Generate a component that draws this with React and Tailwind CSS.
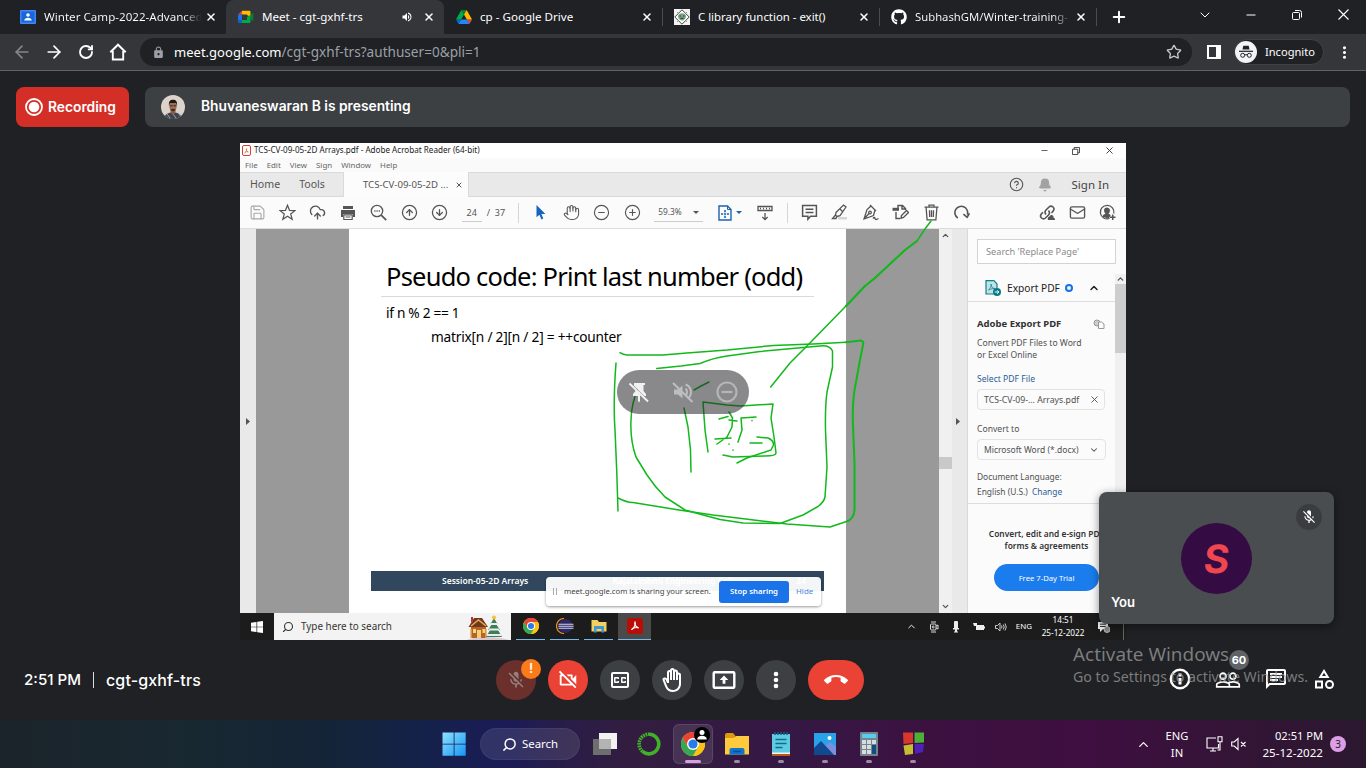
import {
  ArrowLeft, ArrowRight, RotateCw, X, Plus, Star, Minus, ChevronDown, ChevronUp,
  Save, CloudUpload, CircleArrowUp, CircleArrowDown, Hand, CircleMinus, CirclePlus,
  Mail, CircleHelp, Bell, Search,
} from "lucide-react";
import {
  MdLock, MdVolumeUp, MdMoreVert, MdCallEnd, MdOutlineVideocamOff, MdMicOff,
  MdOutlineClosedCaptionOff, MdOutlineBackHand,
  MdPeopleOutline, MdOutlineChat, MdOutlineCategory,
} from "react-icons/md";
import { FaGithub } from "react-icons/fa";

const SANS = "font-['Noto_Sans',sans-serif]";

/* ---------- logos ---------- */

function ClassroomLogo() {
  return (
    <svg viewBox="0 0 16 14" className="h-[14px] w-4">
      <rect width="16" height="14" rx="1" fill="#4285f4" />
      <rect x="1.5" y="1.5" width="13" height="11" fill="#1a66d6" />
      <circle cx="8" cy="5" r="1.8" fill="#fff" />
      <path d="M4.3 10.5c0-2 2-2.8 3.7-2.8s3.7.8 3.7 2.8z" fill="#fff" />
    </svg>
  );
}

function MeetLogo() {
  return (
    <svg viewBox="0 0 16 14" className="h-[14px] w-4">
      <path d="M0 4.5 4 .8V4.5z" fill="#ea4335" />
      <path d="M0 4.5h4v6H0z" fill="#1a73e8" />
      <path d="M0 10.5h4V13H1a1 1 0 0 1-1-1z" fill="#1a5dd0" />
      <path d="M4 .8h7.5a1 1 0 0 1 1 1V7L9 5V4.5H4z" fill="#fbbc04" />
      <path d="M4 10h5V7l3.5-2v7a1 1 0 0 1-1 1H4z" fill="#00ac47" />
      <path d="M12.5 5 15.3 2.5v9L12.5 9z" fill="#00832d" />
    </svg>
  );
}

function DriveLogo() {
  return (
    <svg viewBox="0 0 87.3 78" className="h-[14px] w-4">
      <path d="m6.6 66.85 3.85 6.65c.8 1.4 1.95 2.5 3.3 3.3l13.75-23.8h-27.5c0 1.55.4 3.1 1.2 4.5z" fill="#0066da" />
      <path d="m43.65 25-13.75-23.8c-1.35.8-2.5 1.9-3.3 3.3l-25.4 44a9.06 9.06 0 0 0 -1.2 4.5h27.5z" fill="#00ac47" />
      <path d="m73.55 76.8c1.35-.8 2.5-1.9 3.3-3.3l1.6-2.75 7.65-13.25c.8-1.4 1.2-2.95 1.2-4.5h-27.5l5.85 11.5z" fill="#ea4335" />
      <path d="m43.65 25 13.75-23.8c-1.35-.8-2.9-1.2-4.5-1.2h-18.5c-1.6 0-3.15.45-4.5 1.2z" fill="#00832d" />
      <path d="m59.8 53h-32.3l-13.75 23.8c1.35.8 2.9 1.2 4.5 1.2h50.8c1.6 0 3.15-.45 4.5-1.2z" fill="#2684fc" />
      <path d="m73.4 26.5-12.7-22c-.8-1.4-1.95-2.5-3.3-3.3l-13.75 23.8 16.15 28h27.45c0-1.55-.4-3.1-1.2-4.5z" fill="#ffba00" />
    </svg>
  );
}

function TutorialLogo() {
  return (
    <svg viewBox="0 0 16 16" className="h-4 w-4">
      <rect width="16" height="16" fill="#f3f3f1" />
      <path d="M8 .8 15.2 8 8 15.2.8 8z" fill="#fff" stroke="#444" strokeWidth="1" />
      <path d="M4 7.5c0-2.200 2-3.200 4-3.200s4 1 4 3.200-2 4-4 4-4-1.800-4-4z" fill="#79a386" />
      <path d="M5.500 7h1.500m2 0h1.500M6.500 9.300h3" stroke="#2d4a38" strokeWidth="1.200" />
      <path d="M3 3l2 2m8-2-2 2M3 13l2-2m8 2-2-2" stroke="#888" strokeWidth=".8" />
    </svg>
  );
}

function ChromeLogo({ className }) {
  return (
    <svg viewBox="0 0 24 24" className={className}>
      <circle cx="12" cy="12" r="12" fill="#fbc116" />
      <path d="M12 6h10.400A12 12 0 0 0 1.600 6l5.200 9z" fill="#ea4335" />
      <path d="M6.800 15 1.600 6A12 12 0 0 0 12 24l5.200-9z" fill="#34a853" />
      <path d="M17.200 15 12 24A12 12 0 0 0 22.400 6H12z" fill="#fbc116" />
      <circle cx="12" cy="12" r="6" fill="#fff" />
      <circle cx="12" cy="12" r="4.600" fill="#2a7bea" />
    </svg>
  );
}

function AcrobatMark({ className }) {
  return (
    <svg viewBox="0 0 16 16" className={className}>
      <path d="M8 3.200c1.200 2.800.3 5.300-3.800 8.800M8 3.200C6.900 6 8.600 9 12.300 10.200c-3-1-6-.3-8.100 1.800" fill="none" stroke="currentColor" strokeWidth="1.300" strokeLinecap="round" />
    </svg>
  );
}

/* ---------- browser chrome ---------- */

function Tab({ className, icon, title, children }) {
  return (
    <div className={`flex h-full shrink-0 items-center pr-[9px] ${className}`}>
      <span className="flex w-[24px] shrink-0 items-center">{icon}</span>
      <span className="min-w-0 flex-1 overflow-hidden whitespace-nowrap leading-5">{title}</span>
      {children}
      <X className="ml-1 h-3 w-3 shrink-0 text-white" strokeWidth={3} />
    </div>
  );
}

function TabStrip() {
  return (
    <div className={`flex h-[34px] bg-[#202124] text-[11.6px] text-white ${SANS}`}>
      <Tab
        className="w-[226px] pl-5"
        icon={<ClassroomLogo />}
        title={
          <span className="bg-gradient-to-r from-white from-88% to-[#333] to-98% bg-clip-text text-transparent">
            Winter Camp-2022-Advanced
          </span>
        }
      />
      <Tab className="w-[218px] rounded-t-lg bg-[#35363a] pl-3" icon={<MeetLogo />} title="Meet - cgt-gxhf-trs">
        <MdVolumeUp className="mr-[6px] h-3 w-3" />
      </Tab>
      <Tab className="w-[218px] pl-3" icon={<DriveLogo />} title="cp - Google Drive" />
      <div className="my-2 w-px bg-[#4a4c50]" />
      <Tab className="w-[216px] pl-[11px] text-[11.4px]" icon={<TutorialLogo />} title="C library function - exit()" />
      <div className="my-2 w-px bg-[#4a4c50]" />
      <Tab
        className="w-[216px] pl-[11px] text-[11.3px]"
        icon={<FaGithub className="h-4 w-4" />}
        title={
          <span className="bg-gradient-to-r from-white from-90% to-[#444] bg-clip-text text-transparent">
            SubhashGM/Winter-training-
          </span>
        }
      />
      <div className="my-2 w-px bg-[#4a4c50]" />
      <Plus className="mt-2 ml-[13px] h-[18px] w-[18px]" strokeWidth={2.600} />
      <div className="ml-auto flex h-[29px] items-center">
        <span className="flex w-[46px] justify-center"><ChevronDown className="h-4 w-4" strokeWidth={1.500} /></span>
        <span className="flex w-[46px] justify-center"><Minus className="h-[14px] w-[14px]" strokeWidth={1.800} /></span>
        <span className="flex w-[46px] justify-center">
          <svg viewBox="0 0 10 10" className="h-[10px] w-[10px]" fill="none" stroke="#fff">
            <rect x=".5" y="2.500" width="7" height="7" rx="1" />
            <path d="M3 .5h4.500a2 2 0 0 1 2 2V7.500" />
          </svg>
        </span>
        <span className="flex w-[46px] justify-center">
          <svg viewBox="0 0 11 11" className="h-[11px] w-[11px]" stroke="#fff" strokeWidth="1.100"><path d="M.5.5l10 10M10.500.5l-10 10" /></svg>
        </span>
      </div>
    </div>
  );
}

function AddressBar() {
  return (
    <div className={`flex h-[37px] items-center border-b border-[#5f6368] bg-[#35363a] text-white ${SANS}`}>
      <div className="ml-3 flex gap-3">
        <ArrowLeft className="h-5 w-5 text-[#85868a]" />
        <ArrowRight className="h-5 w-5" />
        <RotateCw className="h-5 w-5 p-[2px]" strokeWidth={2.800} />
        <svg viewBox="0 0 20 18" className="h-5 w-5" fill="none" stroke="#fff" strokeWidth="1.900">
          <path d="M2.300 9.300 10 1.700l7.700 7.600M4.800 8v8.500h10.400V8" />
        </svg>
      </div>
      <div className="ml-3 flex h-7 w-[1052px] items-center rounded-full bg-[#202124] pr-[10px] pl-3">
        <MdLock className="h-[13px] w-[13px] text-[#9aa0a6]" />
        <span className="ml-[9px] text-[13px] leading-5 tracking-[0.02px]">meet.google.com</span>
        <span className="text-[13.6px] leading-5 text-[#9aa0a6]">/cgt-gxhf-trs?authuser=0&amp;pli=1</span>
        <Star className="ml-auto h-4 w-4 text-[#c6c8cb]" />
      </div>
      <div className="ml-[15px] h-[14px] w-[14px] border-2 border-r-[5px] border-white" />
      <div className="ml-[13px] flex h-[26px] w-[90px] items-center rounded-full border border-[#3f4145] bg-[#202124]">
        <svg viewBox="0 0 22 22" className="h-[22px] w-[22px] shrink-0">
          <circle cx="11" cy="11" r="11" fill="#f1f3f4" />
          <path d="M7.500 8.500 8.300 4.800h5.400l.8 3.700z" fill="#202124" />
          <path d="M4 10.300h14" stroke="#202124" strokeWidth="1.200" />
          <g fill="none" stroke="#202124">
            <circle cx="7.700" cy="14.300" r="2" /><circle cx="14.300" cy="14.300" r="2" /><path d="M9.700 14q1.300-.8 2.600 0" />
          </g>
        </svg>
        <span className="ml-2 text-[11.1px] leading-4">Incognito</span>
      </div>
      <MdMoreVert className="ml-[11px] h-[19px] w-[19px]" />
    </div>
  );
}

/* ---------- meet header ---------- */

function Presenter() {
  return (
    <div className="flex h-10 gap-4 px-4 font-['Inter',sans-serif] font-semibold text-white">
      <div className="flex w-[113px] items-center rounded-lg bg-[#d32f27] pl-[9px] text-[13.8px]">
        <svg viewBox="0 0 18 18" className="mr-[5px] h-[18px] w-[18px]">
          <circle cx="9" cy="9" r="8" fill="none" stroke="#fff" strokeWidth="1.800" />
          <circle cx="9" cy="9" r="5.300" fill="#fff" />
        </svg>
        Recording
      </div>
      <div className="flex flex-1 items-center rounded-lg bg-[#3c4043] pl-4 text-[13.8px]">
        <svg viewBox="0 0 24 24" className="mr-4 h-6 w-6 overflow-hidden rounded-full">
          <rect width="24" height="24" fill="#dcd3ca" />
          <path d="M3 24c.5-5 4-6.500 9-6.500s8.500 1.500 9 6.500z" fill="#3c4452" />
          <path d="M6 19l3 4m3-4 3 4m3-4 2 3" stroke="#9aa4b4" />
          <path d="M9.500 14h5v4l-2.500 2-2.500-2z" fill="#8a5c43" />
          <ellipse cx="12" cy="11.500" rx="3.700" ry="4.800" fill="#9c6d52" />
          <path d="M8 11c-.6-4.500 1-6.300 4-6.300s4.600 1.800 4 6.300l-1-3h-6z" fill="#1f1a19" />
          <path d="M9 10.800h2.600m1 0h2.600" stroke="#222" strokeWidth=".9" />
          <path d="M9.500 14.500c.8 2 4.200 2 5 0l-2.500-.8z" fill="#3f2b22" />
        </svg>
        <span className="-mt-px">Bhuvaneswaran B is presenting</span>
      </div>
    </div>
  );
}

/* ---------- shared acrobat window ---------- */

const slot = "flex w-[30.4px] shrink-0 items-center justify-center";
const ico = "h-[17px] w-[17px]";

function AcrobatToolbar() {
  return (
    <div className="flex h-8 items-center border-b border-[#dcdcdc] bg-[#fbfbfb] text-[9px] text-[#555]">
      <div className="flex pl-[2px]">
        <span className={`${slot} text-[#a9a9a9]`}><Save className={ico} strokeWidth={1.600} /></span>
        <span className={slot}>
          <svg viewBox="0 0 17 17" className={ico} fill="none" stroke="#555" strokeWidth="1.200">
            <path d="m8.500 1.200 2 5.100 5.500.3-4.300 3.400 1.500 5.300-4.700-3-4.700 3L5.300 10 1 6.600l5.500-.3z" />
          </svg>
        </span>
        <span className={slot}><CloudUpload className={ico} strokeWidth={1.900} /></span>
        <span className={slot}>
          <svg viewBox="0 0 16 16" className="h-4 w-4" fill="#555">
            <path d="M3 1h10v3H3zM1 5h14v7h-2V9H3v3H1z" />
            <path d="M3.800 9.800h8.400v4.700H3.800z" fill="#fff" stroke="#555" strokeWidth="1.200" />
            <path d="M5.500 12h5" stroke="#555" />
          </svg>
        </span>
        <span className={slot}>
          <svg viewBox="0 0 17 17" className={ico} fill="none" stroke="#555" strokeWidth="1.300">
            <circle cx="7" cy="7" r="5.700" /><path d="m11.200 11.200 5 5" strokeWidth="1.700" /><path d="M4.300 7h1.200m1 0h1.200m1 0h1.200" />
          </svg>
        </span>
        <span className={slot}><CircleArrowUp className={ico} strokeWidth={1.800} /></span>
        <span className={slot}><CircleArrowDown className={ico} strokeWidth={1.800} /></span>
      </div>
      <span className="ml-[7px] flex h-[19px] w-5 items-center justify-center border-b border-[#ccc]">24</span>
      <span className="ml-[5px] w-[31px] whitespace-pre text-[9px]">/  37</span>
      <div className="h-5 w-px bg-[#d5d5d5]" />
      <div className="flex pl-[7px]">
        <span className={slot}>
          <svg viewBox="0 0 10 15" className="h-[15px] w-[10px]"><path d="M.5 0v12.300l2.900-2.500 2 4.700 1.900-.9-1.900-4.500 4-.2z" fill="#1565c0" /></svg>
        </span>
        <span className={slot}><Hand className={ico} strokeWidth={1.500} /></span>
        <span className={slot}><CircleMinus className={ico} strokeWidth={1.600} /></span>
        <span className={slot}><CirclePlus className={ico} strokeWidth={1.600} /></span>
      </div>
      <span className="ml-[7px] flex h-[19px] w-[49px] items-center border-b border-[#ccc] pl-1 text-[8.300px]">
        59.3%
        <svg viewBox="0 0 6 3" className="ml-[11px] h-[3px] w-[6px]" fill="#555"><path d="M0 0h6L3 3z" /></svg>
      </span>
      <span className="ml-[15px] flex items-center gap-1">
        <svg viewBox="0 0 14 16" className="h-4 w-[14px]" fill="none" stroke="#1d63ad" strokeWidth="1.400">
          <path d="M1 1h8.500L13 4.500V15H1z" /><path d="M9.500 1v3.500H13" strokeWidth="1" />
          <path d="M7 5v2.200M7 10.800V13M3 9h2.200M8.800 9H11" strokeWidth="1.600" /><path d="M6 9h2" />
        </svg>
        <svg viewBox="0 0 6 3" className="h-[3px] w-[6px]" fill="#1d63ad"><path d="M0 0h6L3 3z" /></svg>
      </span>
      <svg viewBox="0 0 16 16" className="ml-[15px] h-4 w-4" fill="none" stroke="#555" strokeWidth="1.300">
        <path d="M1 1.500h14v4H1zM3 3.500h1m2 0h1m2 0h1m2 0h1M8 8v6.500M5.300 12 8 14.700 10.700 12" />
      </svg>
      <div className="ml-[14px] h-5 w-px bg-[#d5d5d5]" />
      <div className="flex pl-[6px]">
        <span className={slot}>
          <svg viewBox="0 0 16 16" className={ico} fill="none" stroke="#555" strokeWidth="1.400">
            <path d="M1.500 1.500h13v10H9L6.500 14.300V11.500h-5zM4.300 5h7.400M4.300 8h7.400" />
          </svg>
        </span>
        <span className={slot}>
          <svg viewBox="0 0 17 17" className={ico} fill="none" stroke="#555" strokeWidth="1.300">
            <path d="M7 13h9v2.500H7z" fill="#d5d5d5" stroke="none" />
            <path d="M5 8.500 12.500 1l2.500 2-6 8.700-3 .8-1.500-1.500zM4.500 11 1.500 14.500h3.500l1-2M9 5l3 3" />
          </svg>
        </span>
        <span className={slot}>
          <svg viewBox="0 0 17 17" className={ico} fill="none" stroke="#555" strokeWidth="1.300">
            <path d="M9 2 13 6l-1.500 5.500L2 15 5 5.500zM2 15l5-5.500M8 1l6 6" /><circle cx="8" cy="8.500" r="1.300" /><path d="M11 14.500q1.500-2 2 0t3.500 0" />
          </svg>
        </span>
        <span className={slot}>
          <svg viewBox="0 0 17 17" className={ico} fill="none" stroke="#555" strokeWidth="1.400">
            <path d="M4 8V14.500h4M6 4.500V1.500h4.500l3 3V6M10 1.500V5h3.500" /><path d="M.5 3.800h6.500v3H.5z" fill="#555" stroke="none" /><path d="m9.500 11.500 5-5 2 2-5 5-2.500.7z" />
          </svg>
        </span>
        <span className={slot}>
          <svg viewBox="0 0 16 17" className={ico} fill="none" stroke="#555" strokeWidth="1.300">
            <path d="M1 3.200h14M5.500 3V1.200h5V3M2.600 3.500l1 12.300h8.800l1-12.300M6 6.300l.2 6.700M8 6.300V13M10 6.300 9.800 13" />
          </svg>
        </span>
        <span className={slot}>
          <svg viewBox="0 0 16 16" className={ico} fill="none" stroke="#555" strokeWidth="1.500">
            <path d="M4.500 13.200A6 6 0 1 1 13.500 10M9.800 9.500l3.500 3 2.200-3.700" />
          </svg>
        </span>
      </div>
      <div className="ml-auto flex pr-[3px]">
        <span className={slot}>
          <svg viewBox="0 0 17 17" className={ico} fill="none" stroke="#555" strokeWidth="1.600">
            <path d="M7 10.500q-2-2.500 0-4.500l3-3q2-1.700 4 0t0 4.200L12.500 9M9.500 6.500q2 2.500 0 4.500l-3 3q-2 1.700-4 0t0-4.200L4 8.200" />
            <path d="M9 16q-1-3 1.500-3.500.5-2 2.500-1.500 2 .500 1.500 2.500 2 .500 1.500 2.500z" fill="#555" stroke="none" />
          </svg>
        </span>
        <span className={slot}><Mail className={ico} strokeWidth={1.900} /></span>
        <span className={slot}>
          <svg viewBox="0 0 17 17" className={ico} fill="none" stroke="#555" strokeWidth="1.300">
            <path d="M10.500 14.500A6.800 6.800 0 1 1 14.800 9.500" /><path d="M3.500 13q0-2.500 3-3.200-1.700-1.500-1.500-4Q5.500 3.500 8 3.500t3 2.500q.2 2.300-1.500 3.800 2 .500 2.200 1.700l-2 3z" fill="#555" stroke="none" /><path d="M11 13.200h5.500M13.700 10.500V16" strokeWidth="1.500" />
          </svg>
        </span>
      </div>
    </div>
  );
}

function ExportPanel() {
  return (
    <div className="flex h-full w-[159px] flex-col border-l border-[#d9d9d9] bg-[#fbfbfb] text-[8.600px] leading-3 whitespace-nowrap text-[#505050]">
      <div className="mt-[10px] ml-[9px] flex h-[25px] w-[139px] items-center border border-[#d3d3d3] bg-white pl-2 text-[9.200px] text-[#8a8a8a]">
        Search 'Replace Page'
      </div>
      <div className="mt-[10px] flex min-h-0 flex-1">
        <div className="w-[147px]">
          <div className="flex h-[28px] items-center border-b border-[#dedede] pl-[17px] text-[10.200px] text-[#222]">
            <svg viewBox="0 0 16 16" className="mr-[6px] h-4 w-4">
              <path d="M1 .7h8L12 4v10H1z" fill="#bfe3e6" stroke="#14808c" strokeWidth="1.200" />
              <path d="M3.500 10C6 8 6.500 6 6 4c0 3 2 4.500 4 4.500-2 0-4 .3-6.500 1.500" fill="none" stroke="#14808c" strokeWidth=".8" />
              <circle cx="12" cy="12" r="4" fill="#0b7a88" /><path d="M9.800 12h4m-1.600-1.700 1.700 1.700-1.700 1.700" stroke="#fff" fill="none" />
            </svg>
            Export PDF
            <span className="ml-[5px] h-2 w-2 rounded-full border-[2.500px] border-[#1473e6]" />
            <ChevronUp className="ml-[15px] h-3 w-3" strokeWidth={3} />
          </div>
          <div className="pl-[9px]">
            <div className="mt-[14px] flex h-4 items-center text-[9.500px] font-bold text-[#333]">
              Adobe Export PDF
              <svg viewBox="0 0 12 10" className="ml-8 h-[10px] w-3" fill="none" stroke="#999">
                <circle cx="4" cy="4" r="3" fill="#ccc" /><path d="M5.500 3h3L11 5v4.500H5.500z" fill="#fbfbfb" />
              </svg>
            </div>
            <p className="mt-[5px]">Convert PDF Files to Word<br />or Excel Online</p>
            <p className="mt-3 text-[#2b5c96]">Select PDF File</p>
            <div className="mt-1 flex h-[21px] w-[128px] items-center justify-between rounded-sm border border-[#e3e3e3] pr-1 pl-[6px] text-[8.700px]">
              TCS-CV-09-... Arrays.pdf <X className="h-[11px] w-[11px]" strokeWidth={2} />
            </div>
            <p className="mt-[13px]">Convert to</p>
            <div className="mt-[4px] flex h-[21px] w-[129px] items-center justify-between rounded-sm border border-[#e3e3e3] pr-[6px] pl-[6px] text-[8.500px]">
              Microsoft Word (*.docx) <ChevronDown className="h-[10px] w-[10px]" strokeWidth={2.500} />
            </div>
            <p className="mt-[11px] text-[8.400px]">Document Language:</p>
            <p className="mt-[3px] text-[8.400px]">English (U.S.) <span className="ml-[2px] text-[#2b5c96]">Change</span></p>
          </div>
          <div className="mt-[5px] border-t border-[#dedede]" />
          <p className="mt-6 w-[157px] text-center text-[8.400px] font-semibold text-[#333]">Convert, edit and e-sign PDF<br />forms &amp; agreements</p>
          <div className="mt-[12px] ml-[26px] flex h-[27px] w-[105px] items-center justify-center rounded-full bg-[#1b7ced] text-[7.700px] text-white">
            Free 7-Day Trial
          </div>
        </div>
        <div className="flex w-[11px] flex-col items-center bg-[#f0f0f0]">
          <ChevronUp className="h-[10px] w-[9px]" strokeWidth={3.500} />
          <div className="h-[69px] w-full bg-[#cdcdcd]" />
        </div>
      </div>
    </div>
  );
}

function AcrobatWindow() {
  return (
    <div className="flex h-[470px] flex-col bg-white leading-none text-[#555]">
      <div className="flex h-[15px] items-center bg-white pl-[2px] text-[8.100px] text-[#222]">
        <span className="mr-[3px] flex h-[11px] w-[9px] items-center justify-center rounded-[2px] border border-[#cf4036] text-[#cf4036]">
          <AcrobatMark className="h-2 w-2" />
        </span>
        TCS-CV-09-05-2D Arrays.pdf - Adobe Acrobat Reader (64-bit)
        <div className="ml-auto flex items-center text-[#333]">
          <Minus className="h-[9px] w-[9px]" />
          <svg viewBox="0 0 9 9" className="ml-[23px] h-2 w-2" fill="none" stroke="currentColor"><path d="M.5 2.500h6v6h-6zM2.500 2.500v-2h6v6h-2" /></svg>
          <X className="mr-[11px] ml-6 h-[11px] w-[11px]" strokeWidth={2} />
        </div>
      </div>
      <div className="flex h-[14px] items-center gap-[9px] bg-[#fafafa] pt-[2px] pl-[5px] text-[7.900px] text-[#666]">
        <span>File</span><span>Edit</span><span>View</span><span>Sign</span><span>Window</span><span>Help</span>
      </div>
      <div className="flex h-[25px] items-center border-t border-b border-[#dadada] bg-[#e9e9e9] text-[10.600px]">
        <span className="ml-[10px]">Home</span>
        <span className="ml-[19px]">Tools</span>
        <div className="ml-[18px] flex h-[25px] w-[126px] items-center border-x border-[#dadada] bg-[#fcfcfc] pl-[19px] text-[9.600px]">
          TCS-CV-09-05-2D ... <X className="ml-[7px] h-2 w-2" strokeWidth={3} />
        </div>
        <CircleHelp className="ml-auto h-[15px] w-[15px]" strokeWidth={1.800} />
        <Bell className="ml-[14px] h-[14px] w-[14px] text-[#a2a2a2]" fill="#a2a2a2" />
        <span className="mr-[17px] ml-5 text-[11.500px] text-[#444]">Sign In</span>
      </div>
      <AcrobatToolbar />
      <div className="flex min-h-0 flex-1">
        <div className="flex w-4 items-center justify-center bg-[#e9e9e9]">
          <svg viewBox="0 0 4 7" className="h-[7px] w-1" fill="#555"><path d="M0 0v7l4-3.500z" /></svg>
        </div>
        <div className="w-[93px] bg-[#999]" />
        <div className="flex w-[497px] flex-col bg-white text-black">
          <div className="mt-[30px] ml-[32px] h-[38px] w-[433px] border-b border-[#d9d9d9] pl-[5px] text-[25.500px] leading-[35px] tracking-[-0.780px] whitespace-nowrap">
            Pseudo code: Print last number (odd)
          </div>
          <p className="mt-[6px] ml-[37px] text-[13.700px] leading-5 tracking-[-0.300px]">if n % 2 == 1</p>
          <p className="mt-1 ml-[82px] text-[13.700px] leading-5 tracking-[-0.220px]">matrix[n / 2][n / 2] = ++counter</p>
          <div className="mt-auto mb-[22px] ml-[22px] flex h-[20px] w-[453px] items-center justify-between bg-[#31475e] pr-[18px] pl-[71px] text-[8.500px] font-semibold text-white">
            <span>Session-05-2D Arrays</span>
            <span className="ml-[36px]">Rajalakshmi Engineering College</span>
            <span>24</span>
          </div>
        </div>
        <div className="w-[93px] bg-[#999]" />
        <div className="flex w-[13px] flex-col items-center bg-[#f0f0f0]">
          <ChevronUp className="mt-[2px] h-[9px] w-[9px]" strokeWidth={3.500} />
          <div className="mt-[217px] h-3 w-full bg-[#c9c9c9]" />
          <ChevronDown className="mt-auto mb-[2px] h-[9px] w-[9px]" strokeWidth={3.500} />
        </div>
        <div className="flex w-[15px] items-center justify-center bg-[#e9e9e9] pr-[3px]">
          <svg viewBox="0 0 4 7" className="h-[7px] w-1" fill="#555"><path d="M0 0v7l4-3.500z" /></svg>
        </div>
        <ExportPanel />
      </div>
    </div>
  );
}

function ShareToast() {
  return (
    <div className="absolute top-[434px] left-[306px] flex h-[29px] w-[275px] items-center rounded-sm bg-white/95 pl-[7px] leading-none shadow-[0_1px_3px_rgba(0,0,0,0.400)]">
      <span className="h-[7px] w-[4px] border-x border-[#aaa]" />
      <span className="ml-[7px] w-[147px] text-[7.700px] whitespace-nowrap text-[#444]">meet.google.com is sharing your screen.</span>
      <span className="ml-[8px] flex h-[22px] w-[70px] items-center justify-center rounded-[3px] bg-[#1a73e8] text-[7.800px] font-semibold text-white">Stop sharing</span>
      <span className="ml-[7px] text-[7.900px] text-[#4a87d8]">Hide</span>
    </div>
  );
}

function Ink() {
  return (
    <svg
      viewBox="240 143 886 497"
      className="absolute inset-0 h-full w-full"
      fill="none"
      stroke="#12b81c"
      strokeWidth="1.500"
      strokeLinecap="round"
      strokeLinejoin="round"
    >
      <path d="M620 352.700Q623 355 627 355L663 355 687 353 727 350 773 345.500 813 344 846 342.300" />
      <path d="M846 342.300 861 340.500Q864 341 863 345L860 360 856 382Q852 400 853 425L854.500 463V510Q854 518 848 521" strokeWidth="2" />
      <path d="M848 521 830 527 787 524 713 515 679 510 633 502.500Q628 503 618 498" />
      <path d="M616 363Q613 403 615 430L616.700 470 618 511" />
      <path d="M656.700 368.500 681 366 700 363.500Q713 358 727 356L760 351.500 820 346Q830 345 832.500 351V367L827 392Q825 407 825.500 430L827 467 825 497Q824 502 818 506.500L803 515 780 523.500 743 523 720 519.500Q703 515 685 510L665 497Q655 487 647 475L636 457Q630 440 631 420 631 405 639 385" />
      <path d="M931 221 925 229 917 241 905 250 875 278 865 286 845 307 808 345 790 363 770.700 387" />
      <path d="M684 408 688 427 690.500 450 691 472M708 452 705 430 703 402 727 405 740 406 773 404 771 418 774 437 776 453Q776 456 765 456L733 457 723 455" />
      <path d="M719 419 728 416.500M729 412 732.500 418 732 427 727 437 717 444M715 439 731 438M729 420 737 421M756 417 741 418 742 430 738 442M750 443 762 443M757 437 768 438Q775 441 773 446L771 450 747 458 737 463M694 390 701 386 709 382M729 444v.3M733 450v.3M752 420.500v.3" />
      <path d="M917 241 905 250 875 278 865 286 846 306" strokeWidth="2" />
    </svg>
  );
}

function InnerTaskbar() {
  return (
    <div className="flex h-[27px] items-center bg-[#1c1c1c] leading-none text-white">
      <span className="flex w-[34px] justify-center">
        <svg viewBox="0 0 12 12" className="h-3 w-3" fill="#fff"><path d="M0 1.700 5.500.9v4.800H0zM6.200.8 12 0v5.700H6.200zM0 6.300h5.500v4.800L0 10.300zM6.200 6.300H12V12l-5.800-.8z" /></svg>
      </span>
      <div className="flex h-full w-[237px] items-center bg-[#f3f3f3] pl-2 text-[9.900px] text-[#333]">
        <Search className="mr-[7px] h-3 w-3 -scale-x-100" strokeWidth={2.200} />
        Type here to search
        <svg viewBox="0 0 42 25" className="mt-px mr-[2px] ml-auto h-[25px] w-[42px]">
          <path d="M0 25c8-4 30-4 42 0z" fill="#d8c9cf" />
          <path d="M4 10h15v13H4z" fill="#b5652b" /><path d="M1.500 12 7 3h8l6 9z" fill="#70391f" />
          <path d="M4 11 11.500 5 19 11M4 14v9m15-9v9" stroke="#e9a858" strokeWidth="1.400" fill="none" />
          <path d="M10 15h4v8h-4z" fill="#f5cf7a" /><path d="M6 14h3v4H6zM15.500 14h2.500v4h-2.500z" fill="#fcd770" />
          <path d="M4 2h2v5H4z" fill="#b33" />
          <path d="m27 3-3.500 6h1.500l-4 6h2l-4 7h16l-4-7h2l-4-6h1.500z" fill="#3f7d58" />
          <path d="M24 9h6M22 14.500h10M20 20h14" stroke="#e6efe9" strokeWidth="1.800" />
          <circle cx="27" cy="2.500" r="2" fill="#f7c431" />
        </svg>
      </div>
      <div className="ml-[5px] flex h-full gap-[5px]">
        <span className="flex w-[29px] items-center justify-center border-b border-[#76b9ed]"><ChromeLogo className="h-4 w-4" /></span>
        <span className="flex w-[29px] items-center justify-center border-b border-[#76b9ed]">
          <svg viewBox="0 0 18 16" className="h-4 w-[18px]">
            <path d="M8 .5a7.500 7.500 0 0 0 0 15" fill="none" stroke="#f0932b" strokeWidth="1.200" />
            <circle cx="9.500" cy="8" r="7" fill="#2f2761" /><path d="M2.500 6.200h15M2.300 8.200h15.400M2.500 10.200h15" stroke="#cfd0ea" strokeWidth="1.100" />
          </svg>
        </span>
        <span className="flex w-[29px] items-center justify-center border-b border-[#76b9ed]">
          <svg viewBox="0 0 16 14" className="h-[14px] w-4"><path d="M.5 1h6l1.500 2h7.500v9.500H.5z" fill="#f6cf61" /><path d="M3 7h10v6.500h-2.500V10h-5v3.500H3z" fill="#3f97d3" /></svg>
        </span>
        <span className="flex w-[33px] items-center justify-center border-b border-[#76b9ed] bg-[#4a4a4a]">
          <span className="flex h-4 w-4 items-center justify-center rounded-[3px] bg-[#b90d06]"><AcrobatMark className="h-[14px] w-[14px]" /></span>
        </span>
      </div>
      <div className="mr-[2px] ml-auto flex h-full items-center border-r border-[#666] pr-[13px] text-[8.200px]">
        <ChevronUp className="h-[11px] w-[11px]" />
        <svg viewBox="0 0 10 12" className="ml-[12px] h-3 w-[10px]" fill="none" stroke="#ddd"><rect x="1.500" y="3" width="5.500" height="6" rx="1" /><circle cx="4.200" cy="6" r="1" /><path d="M7 5l2-1v4l-2-1M2 1h5M2 11h5" /></svg>
        <svg viewBox="0 0 8 12" className="ml-[13px] h-3 w-2" fill="#eee"><rect x="2" y="0" width="4" height="8" rx="1" /><path d="M1 7h6v1.500H5v2h1v1H2v-1h1v-2H1z" /></svg>
        <svg viewBox="0 0 12 8" className="ml-[13px] h-2 w-3" fill="#eee"><path d="M3 2h8v5H3zM11 3.500h1v2h-1zM0 0h4v3H1z" /></svg>
        <svg viewBox="0 0 12 10" className="ml-[10px] h-[10px] w-3" fill="none" stroke="#ddd" strokeWidth=".9"><path d="M.5 3.500h2L5 1v8L2.500 6.500h-2zM6.500 3.500q1 1.500 0 3M8.300 2.500q1.700 2.500 0 5M10 1.500q2.500 3.500 0 7" /></svg>
        <span className="ml-[9px] text-[7.900px]">ENG</span>
        <span className="ml-[9px] flex w-[44px] flex-col items-center gap-[4px] text-[8.200px]"><span>14:51</span><span>25-12-2022</span></span>
        <svg viewBox="0 0 12 12" className="ml-[13px] h-3 w-3"><path d="M0 1h10v7H5l-3 3V8H0z" fill="#eee" /><path d="M2 3.200h6M2 5.500h6" stroke="#333" /><circle cx="9" cy="8.500" r="3" fill="#888" stroke="#ddd" strokeWidth=".7" /></svg>
      </div>
    </div>
  );
}

function HoverPill() {
  return (
    <div className="absolute top-[227px] left-[377px] flex h-11 w-[132px] items-center justify-between rounded-full bg-[#202124]/[0.530] pr-[10px] pl-[10px]">
      <svg viewBox="0 0 24 24" className="h-6 w-6" fill="#f1f1f1">
        <path d="M7 3h11v2h-1.500v6l2.500 3v2h-1.700L7 5.800zM6 14l2.500-3V9.500l5.500 6.300h-1V21l-1 1.500-1-1.500v-5H6z" />
        <path d="m2.500 3.500 18.500 18" stroke="#f1f1f1" strokeWidth="1.900" />
      </svg>
      <svg viewBox="0 0 24 24" className="h-6 w-6" fill="none" stroke="#bdbec0" strokeWidth="2">
        <path d="M3 9.500v5h4l4.500 4V5.500L7 9.500z" fill="#bdbec0" stroke="none" />
        <path d="M14.500 8.500c2 1.500 2 5.500 0 7M14.500 4.500c6 2 7 9.500 3 13.500M2 3l19.500 19" />
      </svg>
      <svg viewBox="0 0 24 24" className="h-6 w-6" fill="none" stroke="#b4b5b7" strokeWidth="2.200"><circle cx="12" cy="12" r="9.500" /><path d="M6.500 12h11" /></svg>
    </div>
  );
}

function SharedScreen() {
  return (
    <div className={`relative mt-4 ml-[240px] h-[497px] w-[886px] ${SANS}`}>
      <AcrobatWindow />
      <InnerTaskbar />
      <ShareToast />
      <Ink />
      <HoverPill />
    </div>
  );
}

function SelfTile() {
  return (
    <div className="absolute top-[421px] left-[1099px] h-[132px] w-[235px] rounded-lg bg-[#4a4d50] font-['Inter',sans-serif] shadow-[0_2px_8px_rgba(0,0,0,0.450)]">
      <div className="flex h-full items-center justify-center">
        <div className="flex h-[71px] w-[71px] items-center justify-center rounded-full bg-[#340c43] text-[39px] leading-none font-bold text-[#ef4650]">
          <span className="-skew-x-6">S</span>
        </div>
      </div>
      <div className="absolute top-3 right-3 flex h-[26px] w-[26px] items-center justify-center rounded-full bg-[#3a3d40]">
        <MdMicOff className="h-4 w-4 text-white" />
      </div>
      <span className="absolute bottom-[13px] left-3 text-[13.100px] leading-[18px] font-semibold text-white">You</span>
    </div>
  );
}

/* ---------- meet controls ---------- */

const round = "relative flex h-10 w-10 items-center justify-center rounded-full bg-[#3c4043]";

function Controls() {
  return (
    <div className="flex h-20 items-center pr-[30px] pl-6 font-['Inter',sans-serif] text-white">
      <div className="flex w-[472px] items-center text-[15.100px] font-medium">
        2:51 PM
        <span className="mx-3 h-4 w-px bg-[#dadce0]" />
        <span className="text-[16px] tracking-[0.130px]">cgt-gxhf-trs</span>
      </div>
      <div className="flex gap-3">
        <div className={`${round} !bg-[#6b2f2c]`}>
          <MdMicOff className="h-5 w-5 text-[#94817f]" />
          <span className="absolute -top-px -right-[5px] flex h-5 w-5 items-center justify-center rounded-full bg-[#fa7b17] text-[13px] font-semibold">!</span>
        </div>
        <div className={`${round} !bg-[#ea4335]`}><MdOutlineVideocamOff className="h-[22px] w-[22px]" /></div>
        <div className={round}><MdOutlineClosedCaptionOff className="h-6 w-6" /></div>
        <div className={round}><MdOutlineBackHand className="h-6 w-6" /></div>
        <div className={round}>
          <svg viewBox="0 0 24 20" className="h-5 w-6" fill="none" stroke="#fff">
            <rect x="1.700" y="2.200" width="20.600" height="15.600" rx="1" strokeWidth="2.400" />
            <path d="M12 5.500 16.300 10h-2.900v3.800h-2.800V10H7.700z" fill="#fff" stroke="none" />
          </svg>
        </div>
        <div className={round}>
          <svg viewBox="0 0 6 18" className="h-[18px] w-[6px]" fill="#fff"><circle cx="3" cy="3" r="2.300" /><circle cx="3" cy="9" r="2.300" /><circle cx="3" cy="15" r="2.300" /></svg>
        </div>
        <div className="flex h-10 w-14 items-center justify-center rounded-full bg-[#ea4335]"><MdCallEnd className="h-6 w-6" /></div>
      </div>
      <div className="ml-auto flex gap-6">
        <svg viewBox="0 0 24 24" className="h-6 w-6"><circle cx="12" cy="12" r="9.200" fill="none" stroke="#fff" strokeWidth="2.400" /><path d="M10.500 6.500h3v3h-3zM10.500 11h3v6.500h-3z" fill="#fff" /></svg>
        <span className="relative">
          <MdPeopleOutline className="h-[26px] w-6 scale-110" />
          <span className="absolute -top-[17px] left-[13px] flex h-5 w-5 items-center justify-center rounded-full bg-[#5f6368] text-[11px] font-bold">60</span>
        </span>
        <MdOutlineChat className="h-6 w-6" />
        <MdOutlineCategory className="h-6 w-6" />
      </div>
    </div>
  );
}

function Watermark() {
  return (
    <div className={`pointer-events-none absolute top-[570px] left-[1073px] whitespace-nowrap text-[#9b9c9d]/75 ${SANS}`}>
      <p className="text-[18.900px] leading-[26px]">Activate Windows</p>
      <p className="text-[14.200px] leading-5">Go to Settings to activate Windows.</p>
    </div>
  );
}

/* ---------- desktop taskbar ---------- */

function TaskIcon({ running, children }) {
  return (
    <span className="relative flex h-full w-11 items-center justify-center">
      {children}
      {running && <span className="absolute bottom-[5px] h-[3px] w-[6px] rounded-full bg-[#9d8aa3]" />}
    </span>
  );
}

function Taskbar() {
  return (
    <div className={`flex h-12 items-center bg-[linear-gradient(90deg,#1c242b_0%,#182831_14%,#142437_24%,#14224a_31%,#1b1b57_37%,#281d4a_41%,#321d3f_46%,#351844_58%,#3c1140_68%,#3e0f40_80%,#341437_90%,#2b182f_100%)] text-white ${SANS}`}>
      <svg viewBox="0 0 24 24" className="ml-[442px] h-6 w-6">
        <defs><linearGradient id="win" x1="0" y1="0" x2="1" y2="1"><stop offset="0" stopColor="#8fe0ff" /><stop offset="1" stopColor="#1497f5" /></linearGradient></defs>
        <path d="M.500.500h11.200v11.200H.500zM12.500.500h11.200v11.200H12.500zM.500 12.500h11.200v11.200H.500zM12.500 12.500h11.200v11.200H12.500z" fill="url(#win)" />
      </svg>
      <div className="ml-[14px] flex h-8 w-[100px] items-center rounded-full border border-white/5 bg-white/10 pl-[21px] text-[11.400px]">
        <Search className="mr-[5px] h-[15px] w-[15px] -scale-x-100" strokeWidth={2.400} /> Search
      </div>
      <div className="ml-[3px] flex h-full">
        <TaskIcon>
          <svg viewBox="0 0 24 22" className="h-[22px] w-6"><path d="M6 0h18v16H6z" fill="#f2f2f2" /><path d="M0 6h18v16H0z" fill="#6e6e6e" /><path d="M6 6h12v10H6z" fill="#b3b3b3" /></svg>
        </TaskIcon>
        <TaskIcon>
          <svg viewBox="0 0 24 24" className="h-6 w-6" fill="none" stroke="#43b02a">
            <path d="M12 2.200a9.800 9.800 0 1 1-6.500 17.200" strokeWidth="3.600" /><path d="M5.500 19.400A9.800 9.800 0 0 1 12 2.200" strokeWidth="3.600" strokeDasharray="1.800 .7" />
          </svg>
        </TaskIcon>
        <TaskIcon>
          <span className="relative flex h-10 w-10 items-center justify-center rounded-md border border-white/10 bg-white/10">
            <ChromeLogo className="h-6 w-6" />
            <svg viewBox="0 0 16 16" className="absolute top-[2px] right-[2px] h-4 w-4"><circle cx="8" cy="8" r="8" fill="#000" /><circle cx="8" cy="5.500" r="2.500" fill="#fff" /><path d="M3.200 12.500c0-2.500 2-3.700 4.800-3.700s4.800 1.200 4.800 3.700z" fill="#fff" /></svg>
            <span className="absolute bottom-0 h-[3px] w-4 rounded-full bg-[#d9a0e0]" />
          </span>
        </TaskIcon>
        <TaskIcon running>
          <svg viewBox="0 0 24 22" className="h-[22px] w-6"><path d="M0 2q0-2 2-2h6l2.500 3v4H0z" fill="#dd9a0a" /><path d="M0 5h9l2-2h13v18.500H0z" fill="#fecb3f" /><path d="M4.500 21.500V17q0-2 2-2h11q2 0 2 2v4.500z" fill="#0f76d0" /><path d="M8 18.500h8" stroke="#0a4e93" strokeWidth="1.500" /></svg>
        </TaskIcon>
        <TaskIcon running>
          <svg viewBox="0 0 18 24" className="h-6 w-[18px]"><path d="M0 2h18v19H0z" fill="#5ecbe0" /><path d="M0 20.500h18V22H0z" fill="#f2f2f2" /><path d="M0 22h18v2H0z" fill="#b65a1c" /><path d="M3 0v3m3-3v3m3-3v3m3-3v3m3-3v3" stroke="#0f5f87" strokeWidth="1.500" /><path d="M3.500 7.500h11m-11 4h11m-11 4h7" stroke="#116b92" strokeWidth="1.600" /></svg>
        </TaskIcon>
        <TaskIcon running>
          <svg viewBox="0 0 22 22" className="h-[22px] w-[22px]"><path d="M0 0h22v22H0z" fill="#28a3ea" /><path d="M10 14 16 9l6 5v8H8z" fill="#7b8fdc" /><path d="M0 15 7 8l13 14H0z" fill="#10498f" /><circle cx="15.500" cy="5" r="2" fill="#fff" /></svg>
        </TaskIcon>
        <TaskIcon running>
          <svg viewBox="0 0 18 24" className="h-6 w-[18px]"><rect width="18" height="24" rx="1" fill="#76848c" /><path d="M2 2h14v4H2z" fill="#59cdf1" /><path d="M2 8h4v4H2zM7 8h4v4H7zM12 8h4v4h-4zM2 13h4v4H2zM7 13h4v4H7zM2 18h4v4H2zM7 18h4v4H7z" fill="#d6dde1" /><path d="M12 13h4v9h-4z" fill="#124c86" /></svg>
        </TaskIcon>
        <TaskIcon running>
          <svg viewBox="0 0 22 24" className="h-6 w-[22px]"><path d="M1 .500h10v10.500L1.500 12z" fill="#d8362f" /><path d="M12.500.500H22v10l-9.500.500z" fill="#4caf36" /><path d="m1.500 13.500 9.500-1.500v10L3 23z" fill="#c8bd30" /><path d="M12.500 12H22l-1 8-8 2z" fill="#4e22b8" /></svg>
        </TaskIcon>
      </div>
      <div className="ml-auto flex h-full items-center pr-5 leading-none">
        <ChevronUp className="h-[15px] w-[15px]" strokeWidth={2} />
        <span className="ml-[12px] flex w-7 flex-col items-center gap-[5px] text-[11.200px]"><span>ENG</span><span>IN</span></span>
        <svg viewBox="0 0 18 16" className="ml-[15px] h-4 w-[18px]" fill="none" stroke="#fff" strokeWidth="1.100"><path d="M10 2H1v10h11.500V8M4 15h6M7 12v3M12 .700h4v5h-4zM14 5.700V14h-2.500" /></svg>
        <svg viewBox="0 0 16 14" className="ml-[7px] h-[14px] w-4" fill="none" stroke="#fff" strokeWidth="1.100"><path d="M.700 5h2.500L7 1.500v11L3.200 9H.700zM10 5l4.500 4.500M14.500 5 10 9.500" /></svg>
        <span className="ml-[14px] flex w-[62px] flex-col items-end gap-[5px] text-[11.100px] whitespace-nowrap"><span>02:51 PM</span><span className="text-[11.600px] leading-[11px]">25-12-2022</span></span>
        <span className="ml-[7px] flex h-4 w-4 items-center justify-center rounded-full bg-[#dc9fe5] text-[10px] text-[#2b1430]">3</span>
      </div>
    </div>
  );
}

export default function App() {
  return (
    <div className="flex h-[768px] w-[1366px] flex-col overflow-hidden">
      <TabStrip />
      <AddressBar />
      <main className="relative flex-1 bg-[#202124] pt-4">
        <Presenter />
        <SharedScreen />
        <Controls />
        <SelfTile />
        <Watermark />
      </main>
      <Taskbar />
    </div>
  );
}
